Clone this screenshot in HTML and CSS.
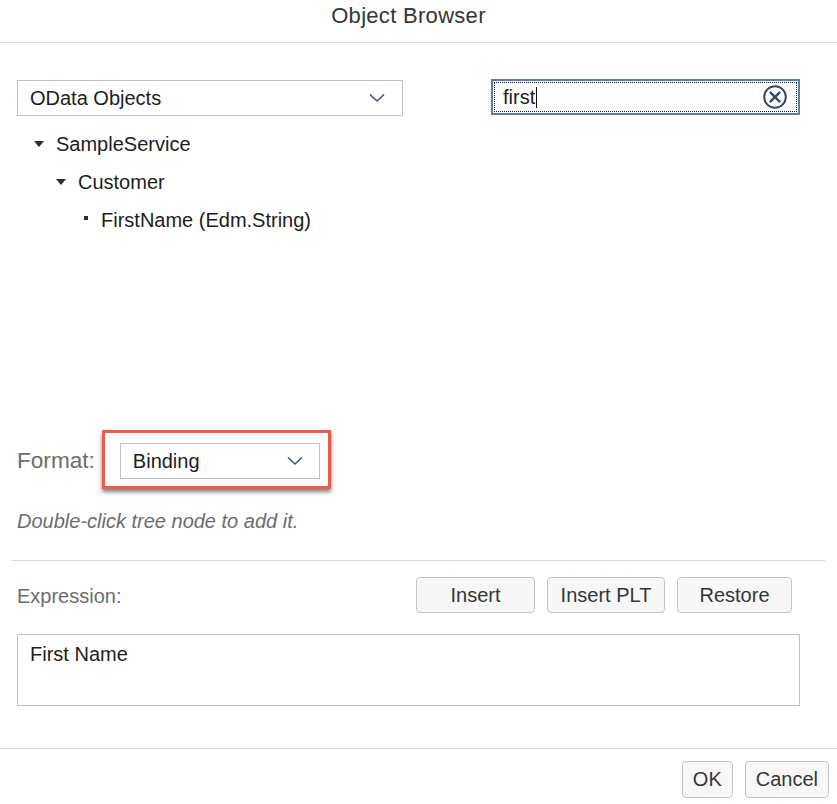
FILE: index.html
```html
<!DOCTYPE html>
<html lang="en">
<head>
<meta charset="utf-8">
<title>Object Browser</title>
<link rel="stylesheet" href="styles.css">
</head>
<body>
<div class="dialog">
  <header class="dlg-header">
    <h1 class="dlg-title">Object Browser</h1>
  </header>

  <main class="dlg-content">
    <div class="top-row">
      <div class="select select-wide">
        <span class="select-text">OData Objects</span>
        <svg class="chevron" width="16" height="10" viewBox="0 0 16 10"><path d="M1 1.5 L8 8 L15 1.5" fill="none" stroke="#3d5670" stroke-width="1.6"/></svg>
      </div>
      <div class="search">
        <div class="search-inner">
          <span class="search-text">first</span><span class="caret"></span>
          <svg class="clear-icon" width="26" height="26" viewBox="0 0 26 26">
            <circle cx="13" cy="13" r="10.8" fill="none" stroke="#2f4c6a" stroke-width="2"/>
            <path d="M8.6 8.6 L17.4 17.4 M17.4 8.6 L8.6 17.4" stroke="#2f4c6a" stroke-width="2.4" stroke-linecap="round"/>
          </svg>
        </div>
      </div>
    </div>

    <ul class="tree">
      <li class="tree-row level-1"><span class="tree-icon"><span class="tri"></span></span><span>SampleService</span></li>
      <li class="tree-row level-2"><span class="tree-icon"><span class="tri"></span></span><span>Customer</span></li>
      <li class="tree-row level-3"><span class="tree-icon"><span class="dot"></span></span><span>FirstName (Edm.String)</span></li>
    </ul>

    <div class="format-row">
      <span class="format-label">Format:</span>
      <div class="highlight">
        <div class="select select-small">
          <span class="select-text">Binding</span>
          <svg class="chevron" width="16" height="10" viewBox="0 0 16 10"><path d="M1 1.5 L8 8 L15 1.5" fill="none" stroke="#3d5670" stroke-width="1.6"/></svg>
        </div>
      </div>
    </div>

    <p class="hint">Double-click tree node to add it.</p>

    <div class="separator"></div>

    <div class="expr-row">
      <span class="expr-label">Expression:</span>
      <div class="expr-buttons">
        <button class="btn btn-insert">Insert</button>
        <button class="btn btn-plt">Insert PLT</button>
        <button class="btn btn-restore">Restore</button>
      </div>
    </div>

    <div class="expr-box">First Name</div>
  </main>

  <footer class="dlg-footer">
    <button class="btn btn-foot">OK</button>
    <button class="btn btn-foot">Cancel</button>
  </footer>
</div>
</body>
</html>
```

FILE: styles.css
```css
* { box-sizing: border-box; }

html, body {
  margin: 0;
  padding: 0;
  background: #ffffff;
}

body {
  font-family: "Liberation Sans", Arial, sans-serif;
  color: #1d1d1d;
  width: 837px;
  height: 804px;
  overflow: hidden;
}

.dialog {
  width: 837px;
}

.dlg-header {
  height: 43px;
  border-bottom: 1px solid #d9d9d9;
  padding: 4px 20px 0 0;
  display: flex;
  justify-content: center;
}

.dlg-title {
  margin: 0;
  font-weight: normal;
  font-size: 22px;
  line-height: 24px;
  color: #32363a;
  letter-spacing: 0.3px;
}

.dlg-content {
  padding: 0 37px 0 17px;
}

.top-row {
  margin-top: 36px;
  display: flex;
  align-items: flex-start;
  gap: 88px;
}

.select {
  display: flex;
  align-items: center;
  justify-content: space-between;
  height: 36px;
  border: 1px solid #c2c2c2;
  background: #fff;
  font-size: 20px;
  color: #1d1d1d;
}

.select-wide {
  width: 386px;
  margin-top: 1px;
  padding: 0 17px 0 12px;
}

.select-small {
  width: 200px;
  padding: 0 16px 0 12px;
}

.chevron { display: block; }

.search {
  width: 309px;
  height: 36px;
  border: 2px solid #5b80a8;
  padding: 1px;
}

.search-inner {
  height: 100%;
  border: 1px dotted #222;
  display: flex;
  align-items: center;
  padding-left: 8px;
  padding-right: 8px;
  font-size: 20px;
  color: #1d1d1d;
}

.caret {
  display: inline-block;
  width: 1px;
  height: 21px;
  background: #111;
  margin-left: 1px;
}

.clear-icon {
  margin-left: auto;
}

.tree {
  list-style: none;
  margin: 9px 0 0 0;
  padding: 0 0 0 17px;
  height: 305px;
}

.tree-row {
  display: flex;
  align-items: center;
  height: 38px;
  font-size: 20px;
  color: #1d1d1d;
}

.level-2 { padding-left: 22px; }
.level-3 { padding-left: 45px; }

.tree-icon {
  width: 22px;
  display: flex;
  align-items: center;
}

.tri {
  width: 0;
  height: 0;
  border-left: 5.5px solid transparent;
  border-right: 5.5px solid transparent;
  border-top: 6px solid #2b2e31;
}

.dot {
  width: 4px;
  height: 4px;
  background: #2b2e31;
  margin-left: 5px;
  margin-top: -5px;
}

.format-row {
  display: flex;
  align-items: center;
  gap: 7px;
}

.format-label {
  font-size: 22.6px;
  color: #6a6d70;
  padding-top: 3px;
}

.highlight {
  border: 3px solid #f05a4a;
  padding: 10px 8px 7px 15px;
  box-shadow: 0 3px 4px rgba(0, 0, 0, 0.5);
  background: #fff;
}

.hint {
  margin: 20px 0 0 0;
  font-size: 20px;
  line-height: 24px;
  font-style: italic;
  color: #6a6d70;
}

.separator {
  margin: 27px -25px 0 -5px;
  height: 1px;
  background: #d9d9d9;
}

.expr-row {
  margin-top: 16px;
  display: flex;
  align-items: center;
  justify-content: space-between;
  padding-right: 8px;
}

.expr-label {
  font-size: 20px;
  color: #6a6d70;
  padding-top: 2px;
}

.expr-buttons {
  display: flex;
  gap: 12px;
}

.btn {
  font-family: "Liberation Sans", Arial, sans-serif;
  font-size: 20px;
  color: #32363a;
  background: #f7f7f7;
  border: 1px solid #c4c4c4;
  border-radius: 4px;
  height: 36px;
  padding: 0;
  margin: 0;
}

.btn-insert { width: 119px; }
.btn-plt { width: 118px; }
.btn-restore { width: 115px; }

.expr-box {
  margin-top: 21px;
  height: 72px;
  border: 1px solid #c2c2c2;
  padding: 7px 12px;
  font-size: 20px;
  line-height: 24px;
  color: #1d1d1d;
}

.dlg-footer {
  margin-top: 42px;
  border-top: 1px solid #d9d9d9;
  padding: 12px 8px 0 0;
  display: flex;
  justify-content: flex-end;
  gap: 12px;
}

.btn-foot {
  height: 37px;
  padding: 0 10px;
}
```
